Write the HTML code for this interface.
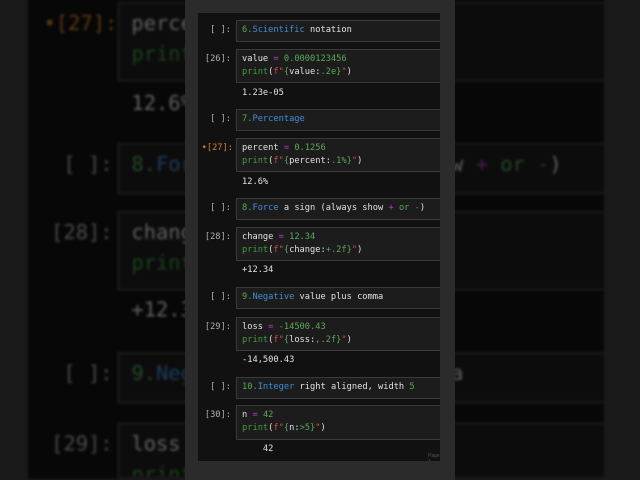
<!DOCTYPE html>
<html style="width:640px;height:480px;overflow:hidden"><head><meta charset="utf-8"><style>
*{margin:0;padding:0;box-sizing:border-box}
body{width:640px;height:480px;overflow:hidden;background:#1a1a1a;position:relative;font-family:"DejaVu Sans Mono","Liberation Mono",monospace}
#wrap{position:absolute;left:0;top:0;width:640px;height:480px;overflow:hidden}
.nb{position:absolute;width:245px;height:448px;background:#111;font-size:8.7px;color:#e2e2e2;overflow:hidden}
.lab{position:absolute;right:209px;color:#b0b0b0;white-space:pre}
.box{position:absolute;left:38px;width:220px;border:1px solid #3a3a3a;background:#1c1c1c;overflow:hidden}
.ln{position:absolute;left:5px;white-space:pre}
.out{position:absolute;left:44px;white-space:pre}
.g{color:#5aa85a}.p{color:#3e9e3e}.b{color:#3f8fd6}.m{color:#b040c0}.f{color:#d05050}.o{color:#d9822b}
#bg{left:28px;top:-292px;height:328px;transform:scale(2.35);transform-origin:0 0;filter:brightness(.42) blur(.6px)}
#panel{position:absolute;left:185px;top:0;width:270px;height:480px;background:#2b2b2b}
#fg{left:198px;top:13px;width:242px}
</style></head><body><div id="wrap">
<div class="nb" id="bg"></div>
<div id="panel"></div>
<div class="nb" id="fg">
<div class="lab" style="top:12px">[ ]:</div>
<div class="box" style="top:7px;height:22px"><div class="ln" style="top:4px"><span class="g">6.</span><span class="b">Scientific</span> notation</div></div>
<div class="lab" style="top:41px">[26]:</div>
<div class="box" style="top:36px;height:34px"><div class="ln" style="top:4px">value <span class="m">=</span> <span class="g">0.0000123456</span></div><div class="ln" style="top:17px"><span class="p">print</span>(<span class="f">f"</span><span class="g">{</span>value:<span class="g">.2e}</span><span class="f">"</span>)</div></div>
<div class="out" style="top:75px">1.23e-05</div>
<div class="lab" style="top:101px">[ ]:</div>
<div class="box" style="top:96px;height:22px"><div class="ln" style="top:4px"><span class="g">7.</span><span class="b">Percentage</span></div></div>
<div class="lab o" style="top:130px;right:207px">•[27]:</div>
<div class="box" style="top:125px;height:34px"><div class="ln" style="top:4px">percent <span class="m">=</span> <span class="g">0.1256</span></div><div class="ln" style="top:17px"><span class="p">print</span>(<span class="f">f"</span><span class="g">{</span>percent:<span class="g">.1%}</span><span class="f">"</span>)</div></div>
<div class="out" style="top:164px">12.6%</div>
<div class="lab" style="top:190px">[ ]:</div>
<div class="box" style="top:185px;height:22px"><div class="ln" style="top:4px"><span class="g">8.</span><span class="b">Force</span> a sign (always show <span class="m">+</span> <span class="g">or</span> <span class="m">-</span>)</div></div>
<div class="lab" style="top:219px">[28]:</div>
<div class="box" style="top:214px;height:34px"><div class="ln" style="top:4px">change <span class="m">=</span> <span class="g">12.34</span></div><div class="ln" style="top:17px"><span class="p">print</span>(<span class="f">f"</span><span class="g">{</span>change:<span class="g">+.2f}</span><span class="f">"</span>)</div></div>
<div class="out" style="top:252px">+12.34</div>
<div class="lab" style="top:279px">[ ]:</div>
<div class="box" style="top:274px;height:22px"><div class="ln" style="top:4px"><span class="g">9.</span><span class="b">Negative</span> value plus comma</div></div>
<div class="lab" style="top:309px">[29]:</div>
<div class="box" style="top:304px;height:34px"><div class="ln" style="top:4px">loss <span class="m">=</span> <span class="g">-14500.43</span></div><div class="ln" style="top:17px"><span class="p">print</span>(<span class="f">f"</span><span class="g">{</span>loss:<span class="g">,.2f}</span><span class="f">"</span>)</div></div>
<div class="out" style="top:342px">-14,500.43</div>
<div class="lab" style="top:369px">[ ]:</div>
<div class="box" style="top:364px;height:22px"><div class="ln" style="top:4px"><span class="g">10.</span><span class="b">Integer</span> right aligned, width <span class="g">5</span></div></div>
<div class="lab" style="top:397px">[30]:</div>
<div class="box" style="top:392px;height:35px"><div class="ln" style="top:4px">n <span class="m">=</span> <span class="g">42</span></div><div class="ln" style="top:17px"><span class="p">print</span>(<span class="f">f"</span><span class="g">{</span>n:<span class="g">&gt;5}</span><span class="f">"</span>)</div></div>
<div class="out" style="top:431px">    42</div>
<div style="position:absolute;left:230px;top:440px;font-size:5px;color:#555;font-family:'Liberation Sans',sans-serif">Page 4</div>
</div>
</div>
<script>
var bg=document.getElementById('bg');bg.innerHTML=document.getElementById('fg').innerHTML;
Array.prototype.slice.call(bg.children).forEach(function(c){var t=parseInt(c.style.top)||0;if(t>310)bg.removeChild(c);else if(t>=300&&c.className=='box')c.style.height='24px';});
</script>
</body></html>
